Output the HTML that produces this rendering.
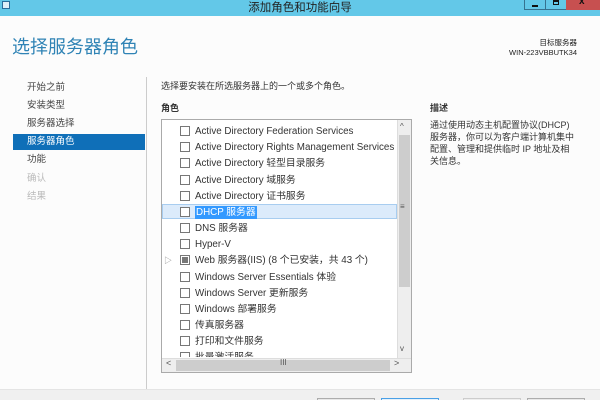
<!DOCTYPE html>
<html><head><meta charset="utf-8"><style>
*{margin:0;padding:0;box-sizing:border-box}
html,body{width:600px;height:400px;overflow:hidden}
body{background:#fcfcfc;font-family:"Liberation Sans","Noto Sans CJK SC",sans-serif;font-size:11px;color:#333;position:relative}
.abs{position:absolute}
.tb{left:0;top:0;width:600px;height:16px;background:#63c8e8}
.nav div{position:absolute;left:27px;font-size:9.5px;line-height:14px;color:#444}
.row{position:absolute;left:162px;width:235px;height:16px;line-height:16px;font-size:9.8px;color:#333}
.row .cb{position:absolute;left:18px;top:3px;width:10px;height:10px;border:1px solid #777;background:#fff}
.row span{position:absolute;left:33px;top:1px;white-space:nowrap}
.btn{position:absolute;top:398px;width:58px;height:2px;border:1px solid #adadad;border-bottom:none;background:#e8e8e8}
</style></head><body>
<div class="abs tb"></div>
<div class="abs" style="left:2px;top:1px;width:8px;height:8px;border:1px solid #2a6d9a;background:#dfeff8"></div>
<div class="abs" style="left:0;top:0;width:600px;line-height:16px;text-align:center;font-size:11.5px;color:#222">添加角色和功能向导</div>
<div class="abs" style="left:524px;top:0;width:22px;height:10px;border:1px solid #36728f;border-top:none;background:#63c8e8"><div class="abs" style="left:7px;top:5px;width:6px;height:2px;background:#111"></div></div>
<div class="abs" style="left:545px;top:0;width:22px;height:10px;border:1px solid #36728f;border-top:none;background:#63c8e8"><div class="abs" style="left:7px;top:0;width:6px;height:5px;border:1px solid #111;border-top-width:2px"></div></div>
<div class="abs" style="left:566px;top:0;width:34px;height:10px;background:#c75050"><div class="abs" style="left:13px;top:-4px;color:#111;font-size:10px;font-weight:bold">x</div></div>

<div class="abs" style="left:12px;top:35px;font-size:18px;color:#2f83b5;line-height:24px">选择服务器角色</div>
<div class="abs" style="right:23px;top:38px;font-size:7.5px;line-height:10px;text-align:right;color:#222">目标服务器<br>WIN-223VBBUTK34</div>

<div class="nav">
<div style="top:81px">开始之前</div>
<div style="top:99px">安装类型</div>
<div style="top:117px">服务器选择</div>
<div class="abs" style="left:13px;top:134px;width:132px;height:16px;background:#0f6fb8"></div>
<div style="top:135px;color:#fff">服务器角色</div>
<div style="top:153px">功能</div>
<div style="top:172px;color:#bbb">确认</div>
<div style="top:190px;color:#bbb">结果</div>
</div>
<div class="abs" style="left:146px;top:77px;width:1px;height:312px;background:#ccc"></div>

<div class="abs" style="left:161px;top:79px;font-size:9px">选择要安装在所选服务器上的一个或多个角色。</div>
<div class="abs" style="left:161px;top:101px;font-size:9px;font-weight:bold">角色</div>
<div class="abs" style="left:430px;top:101px;font-size:9px;font-weight:bold">描述</div>
<div class="abs" style="left:430px;top:119px;font-size:9px;line-height:12px;width:147px">通过使用动态主机配置协议(DHCP)服务器，你可以为客户端计算机集中配置、管理和提供临时 IP 地址及相关信息。</div>

<div class="abs" style="left:161px;top:119px;width:251px;height:254px;border:1px solid #aaa;background:#fff;overflow:hidden">
<div class="abs" style="left:235px;top:0;width:15px;height:238px;background:#eee;border-left:1px solid #ddd"></div>
<div class="abs" style="left:237px;top:15px;width:11px;height:152px;background:#cdcdcd"></div>
<div class="abs" style="left:238px;top:2px;font-size:8px;color:#555">^</div>
<div class="abs" style="left:238px;top:82px;font-size:8px;color:#555">≡</div>
<div class="abs" style="left:238px;top:224px;font-size:8px;color:#555">v</div>
<div class="abs" style="left:0;top:238px;width:250px;height:15px;background:#eee;border-top:1px solid #ddd"></div>
<div class="abs" style="left:14px;top:240px;width:214px;height:11px;background:#cdcdcd"></div>
<div class="abs" style="left:4px;top:238px;font-size:9px;color:#555">&lt;</div>
<div class="abs" style="left:232px;top:238px;font-size:9px;color:#555">&gt;</div>
<div class="abs" style="left:118px;top:238px;font-size:8px;color:#555">III</div>
</div>
<div class="abs" style="left:162px;top:204px;width:235px;height:15px;background:#dcebfb;border:1px solid #a8cdf0"></div>
<div class="row" style="top:123px"><i class="cb"></i><span>Active Directory Federation Services</span></div>
<div class="row" style="top:139px"><i class="cb"></i><span>Active Directory Rights Management Services</span></div>
<div class="row" style="top:155px"><i class="cb"></i><span>Active Directory 轻型目录服务</span></div>
<div class="row" style="top:172px"><i class="cb"></i><span>Active Directory 域服务</span></div>
<div class="row" style="top:188px"><i class="cb"></i><span>Active Directory 证书服务</span></div>
<div class="row" style="top:204px"><i class="cb"></i><span style="background:#3399ff;color:#fff;padding:0 1px;line-height:13px;top:2px">DHCP 服务器</span></div>
<div class="row" style="top:220px"><i class="cb"></i><span>DNS 服务器</span></div>
<div class="row" style="top:236px"><i class="cb"></i><span>Hyper-V</span></div>
<div class="row" style="top:252px"><span style="left:2px;color:#888;font-size:8px">▷</span><i class="cb"><i class="abs" style="left:1px;top:1px;width:6px;height:6px;background:#777"></i></i><span>Web 服务器(IIS) (8 个已安装，共 43 个)</span></div>
<div class="row" style="top:269px"><i class="cb"></i><span>Windows Server Essentials 体验</span></div>
<div class="row" style="top:285px"><i class="cb"></i><span>Windows Server 更新服务</span></div>
<div class="row" style="top:301px"><i class="cb"></i><span>Windows 部署服务</span></div>
<div class="row" style="top:317px"><i class="cb"></i><span>传真服务器</span></div>
<div class="row" style="top:333px"><i class="cb"></i><span>打印和文件服务</span></div>
<div class="row" style="top:349px;height:8px;overflow:hidden"><i class="cb"></i><span>批量激活服务</span></div>

<div class="abs" style="left:0;top:389px;width:600px;height:11px;background:#f0f0f0;border-top:1px solid #e4e4e4"></div>
<div class="btn" style="left:317px"></div>
<div class="btn" style="left:381px;border-color:#4aa0e6;background:#e5f1fb"></div>
<div class="btn" style="left:463px;border-color:#ccc;background:#eee"></div>
<div class="btn" style="left:527px"></div>
</body></html>
